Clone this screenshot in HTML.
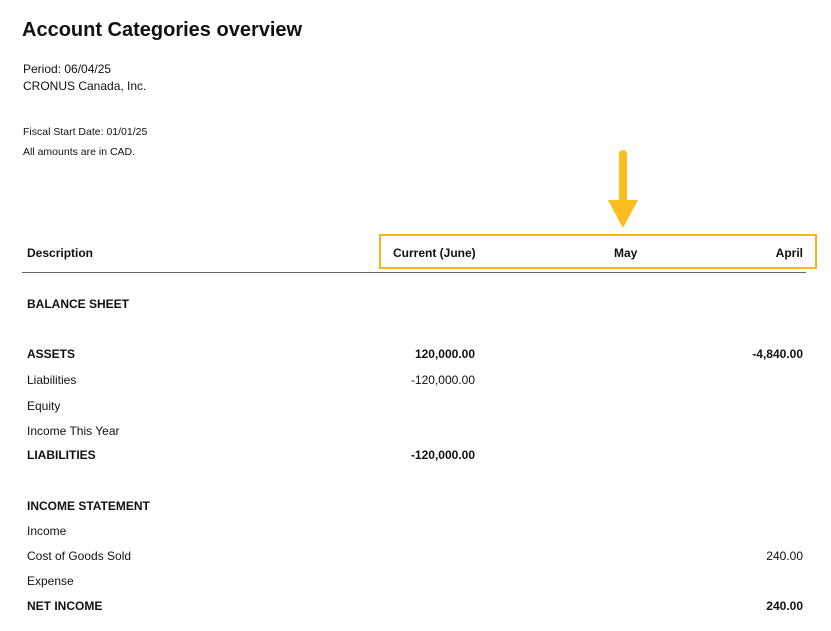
<!DOCTYPE html>
<html><head><meta charset="utf-8"><style>
body{margin:0;width:831px;height:631px;background:#fff;font-family:"Liberation Sans",sans-serif;color:#111;position:relative;overflow:hidden}
div.t{position:absolute;white-space:nowrap}
.b{font-weight:bold}
.s{font-size:12px}
.x{font-size:10.5px}
.r{text-align:right}
</style></head><body>
<div class="t b" style="left:22px;top:19px;font-size:20px">Account Categories overview</div>
<div class="t s" style="left:23px;top:62px">Period: 06/04/25</div>
<div class="t s" style="left:23px;top:79px">CRONUS Canada, Inc.</div>
<div class="t x" style="left:23px;top:126px">Fiscal Start Date: 01/01/25</div>
<div class="t x" style="left:23px;top:146px">All amounts are in CAD.</div>

<svg style="position:absolute;left:598px;top:148px" width="50" height="85">
<line x1="25" y1="6" x2="25" y2="54" stroke="#FBBC1E" stroke-width="8" stroke-linecap="round"/>
<polygon points="10,52 40,52 25,80" fill="#FBBC1E"/>
</svg>
<div style="position:absolute;left:379px;top:234px;width:434px;height:31px;border:2px solid #F5B41E"></div>
<div style="position:absolute;left:22px;top:272px;width:784px;height:1px;background:#666"></div>

<div class="t b s" style="left:27px;top:246px">Description</div>
<div class="t b s" style="left:393px;top:246px">Current (June)</div>
<div class="t b s" style="left:614px;top:246px">May</div>
<div class="t b s r" style="right:28px;top:246px">April</div>

<div class="t b s" style="left:27px;top:297px">BALANCE SHEET</div>
<div class="t b s" style="left:27px;top:347px">ASSETS</div>
<div class="t b s r" style="right:356px;top:347px">120,000.00</div>
<div class="t b s r" style="right:28px;top:347px">-4,840.00</div>
<div class="t s" style="left:27px;top:373px">Liabilities</div>
<div class="t s r" style="right:356px;top:373px">-120,000.00</div>
<div class="t s" style="left:27px;top:399px">Equity</div>
<div class="t s" style="left:27px;top:424px">Income This Year</div>
<div class="t b s" style="left:27px;top:448px">LIABILITIES</div>
<div class="t b s r" style="right:356px;top:448px">-120,000.00</div>

<div class="t b s" style="left:27px;top:499px">INCOME STATEMENT</div>
<div class="t s" style="left:27px;top:524px">Income</div>
<div class="t s" style="left:27px;top:549px">Cost of Goods Sold</div>
<div class="t s r" style="right:28px;top:549px">240.00</div>
<div class="t s" style="left:27px;top:574px">Expense</div>
<div class="t b s" style="left:27px;top:599px">NET INCOME</div>
<div class="t b s r" style="right:28px;top:599px">240.00</div>
</body></html>
